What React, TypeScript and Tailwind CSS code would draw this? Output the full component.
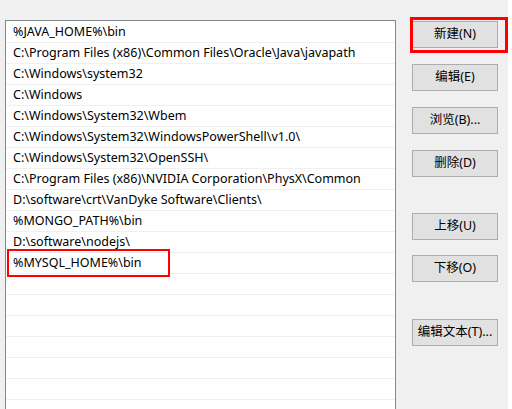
import React from "react";

const paths = [
  "%JAVA_HOME%\\bin",
  "C:\\Program Files (x86)\\Common Files\\Oracle\\Java\\javapath",
  "C:\\Windows\\system32",
  "C:\\Windows",
  "C:\\Windows\\System32\\Wbem",
  "C:\\Windows\\System32\\WindowsPowerShell\\v1.0\\",
  "C:\\Windows\\System32\\OpenSSH\\",
  "C:\\Program Files (x86)\\NVIDIA Corporation\\PhysX\\Common",
  "D:\\software\\crt\\VanDyke Software\\Clients\\",
  "%MONGO_PATH%\\bin",
  "D:\\software\\nodejs\\",
  "%MYSQL_HOME%\\bin",
];

const emptyRows = 7;

function Btn({ label, className = "" }: { label: string; className?: string }) {
  return (
    <button
      className={
        "w-[86px] h-[27px] bg-[#e1e1e1] border border-[#adadad] text-[12.5px] text-black flex items-center justify-center " +
        className
      }
    >
      {label}
    </button>
  );
}

export default function App() {
  return (
    <div
      className="w-[512px] h-[409px] overflow-hidden bg-white flex"
      style={{ fontFamily: '"Noto Sans", "Noto Sans CJK SC", sans-serif' }}
    >
      <div className="w-[508px] h-full bg-[#f0f0f0] flex pt-[20px] pl-[5px]">
        {/* path list */}
        <div className="relative w-[391px] h-[400px] bg-white border border-[#828790] pt-[1px]">
          {paths.map((p) => (
            <div
              key={p}
              className="h-[21px] border-b border-[#f0f0f0] pl-[7px] flex items-center text-[12.5px] text-black whitespace-nowrap"
            >
              {p}
            </div>
          ))}
          {Array.from({ length: emptyRows }).map((_, i) => (
            <div key={i} className="h-[21px] border-b border-[#f0f0f0]" />
          ))}
          <div className="absolute left-[1px] top-[228px] w-[163px] h-[28px] border-2 border-[#ff0000]" />
        </div>

        {/* buttons */}
        <div className="relative flex flex-col ml-[16px] pt-[1px]">
          <Btn label="新建(N)" />
          <Btn label="编辑(E)" className="mt-[16px]" />
          <Btn label="浏览(B)..." className="mt-[16px]" />
          <Btn label="删除(D)" className="mt-[16px]" />
          <Btn label="上移(U)" className="mt-[36px]" />
          <Btn label="下移(O)" className="mt-[15px]" />
          <Btn label="编辑文本(T)..." className="mt-[37px]" />
          <div className="absolute left-[-2px] top-[-3px] w-[98px] h-[36px] border-[3px] border-[#ff0000]" />
        </div>
      </div>
    </div>
  );
}
